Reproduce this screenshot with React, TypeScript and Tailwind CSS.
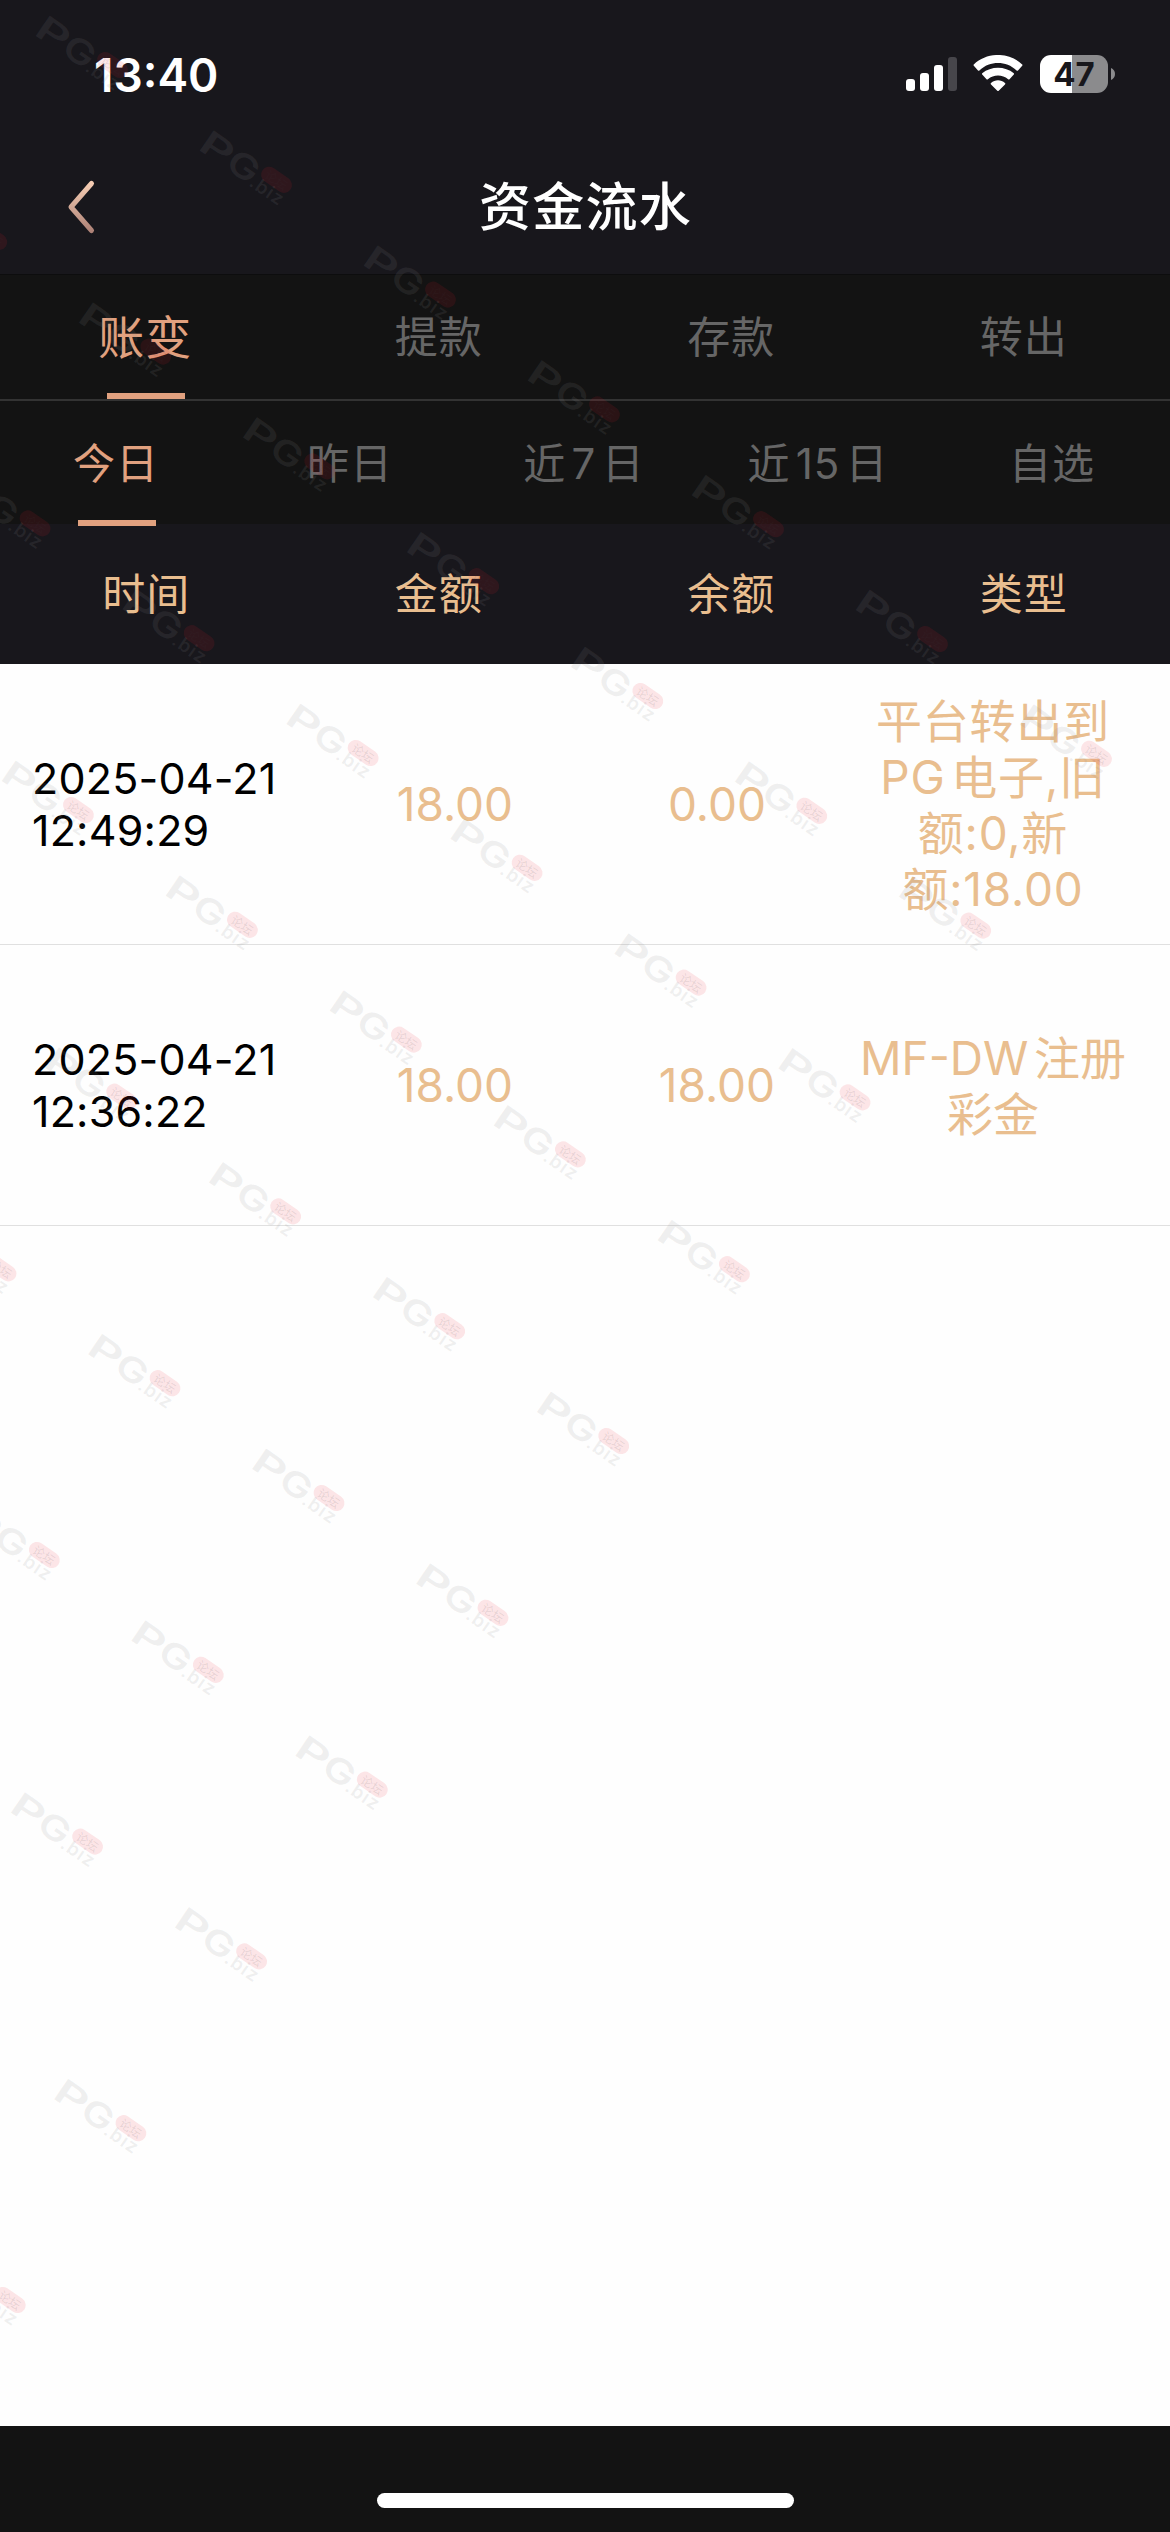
import { clsx } from 'clsx';

const tabs = ['账变', '提款', '存款', '转出'];
const ranges = ['今日', '昨日', '近7日', '近15日', '自选'];
const columns = ['时间', '金额', '余额', '类型'];

const records = [
  {
    date: '2025-04-21',
    time: '12:49:29',
    amount: '18.00',
    balance: '0.00',
    type: ['平台转出到', 'PG电子,旧', '额:0,新', '额:18.00'],
  },
  {
    date: '2025-04-21',
    time: '12:36:22',
    amount: '18.00',
    balance: '18.00',
    type: ['MF-DW注册', '彩金'],
  },
];

// diagonal lattice of stamps, one row shorter each time
const stamps = Array.from({ length: 10 }, (_, b) =>
  Array.from({ length: 10 - b }, (_, i) => {
    const a = i - 3;
    return { x: 34 + 164 * a + 43.3 * b, y: 14.5 + 114.8 * a + 286.6 * b };
  })
)
  .flat()
  .filter((s) => s.x > -95 && s.x < 1170 && s.y > -80);

function StatusBar() {
  return (
    <div className="h-[148px] flex justify-between pl-[94px] pr-[55px]">
      <span className="pt-[47px] text-[46px] leading-[56px] font-semibold text-white">13:40</span>
      <div className="flex pt-[55px]">
        <svg className="w-[51px] h-[38px]" viewBox="0 0 51 38" fill="#fff">
          <rect x="0" y="24" width="9" height="12" rx="3" />
          <rect x="14" y="18" width="9" height="18" rx="3" />
          <rect x="28" y="10" width="9" height="26" rx="3" />
          <rect x="42" y="2" width="9" height="34" rx="3" fill="#47464b" />
        </svg>
        <svg className="ml-[16px] w-[50px] h-[38px]" viewBox="0 0 50 38" fill="#fff">
          <path d="M0.8 10.8a1 1 0 0 1 0-1.4C14-3.2 36-3.2 49.2 9.4a1 1 0 0 1 0 1.4l-4.2 4.6a1 1 0 0 1-1.4 0C33 5.6 17 5.6 6.4 15.4a1 1 0 0 1-1.4 0z" />
          <path d="M9.2 19.6a1 1 0 0 1 0-1.4C18 10.8 32 10.8 40.8 18.2a1 1 0 0 1 0 1.4l-4.3 4.6a1 1 0 0 1-1.4 0c-5.8-5-14.4-5-20.2 0a1 1 0 0 1-1.4 0z" />
          <path d="M18 29.4a1 1 0 0 1 0-1.5c4-3.400 10-3.400 14 0a1 1 0 0 1 0 1.5l-6.300 6.300a1 1 0 0 1-1.400 0z" />
        </svg>
        <div className="ml-[17px] flex w-[68px] h-[38px] items-center justify-center rounded-[11px] bg-[linear-gradient(90deg,#fff_47%,#8b8b8d_47%)] text-[33px] leading-[38px] font-bold text-[#18171c]">
          47
        </div>
        <svg className="mt-[13px] ml-[3px] w-1 h-3" viewBox="0 0 4 12" fill="#8b8b8d">
          <path d="M0 0c2.6 1.100 4 3.400 4 6s-1.400 4.900-4 6z" />
        </svg>
      </div>
    </div>
  );
}

function Stamp({ x, y }: { x: number; y: number }) {
  return (
    <g transform={`translate(${x} ${y})`}>
      <g transform="translate(1 21) rotate(34.5)" fill="#8c8c8c" fillOpacity="0.13">
        <text x="-3" y="0" fontSize="34" fontWeight="600" textLength="34" lengthAdjust="spacingAndGlyphs">P</text>
        <text x="30" y="0" fontSize="34" fontWeight="600" textLength="32" lengthAdjust="spacingAndGlyphs">G</text>
        <text x="60" y="1" fontSize="19" fontWeight="600" textLength="37">.biz</text>
      </g>
      <g transform="translate(78.5 50.5) rotate(34.5)">
        <rect x="-17" y="-8" width="34" height="16" rx="8" fill="#f01830" fillOpacity="0.11" />
        <text x="-12" y="5" fontSize="12" fill="#404040" fillOpacity="0.12">论坛</text>
      </g>
    </g>
  );
}

export default function App() {
  return (
    <div className="relative flex flex-col w-[1170px] h-[2532px] overflow-hidden bg-[#fefefe] font-['Inter','Noto_Sans_CJK_SC',sans-serif] [text-autospace:normal]">
      <header className="h-[274px] bg-[#18171c]">
        <StatusBar />
        <div className="flex items-center h-[118px] px-[66px]">
          <svg className="w-[30px] h-[56px]" viewBox="0 0 30 56" fill="none">
            <defs>
              <linearGradient id="back" x1="0" y1="0" x2="0" y2="56" gradientUnits="userSpaceOnUse">
                <stop stopColor="#fbd3b8" />
                <stop offset="1" stopColor="#a97d73" />
              </linearGradient>
            </defs>
            <path d="M25.5 4.5 5 28l20.5 23.5" stroke="url(#back)" strokeWidth="5" strokeLinecap="round" strokeLinejoin="round" />
          </svg>
          <h1 className="flex-1 pt-[2px] pr-[29px] text-center text-[52px] tracking-[1.3px] font-medium text-white">资金流水</h1>
        </div>
      </header>

      <nav className="grid grid-cols-4 h-[127px] border-t border-b-2 border-t-[#0d0d0e] border-b-[#333] bg-[#131313]">
        {tabs.map((tab, i) => (
          <div
            key={tab}
            className={clsx(
              'flex flex-col items-center justify-between',
              i === 0 ? 'text-[46px] text-[#e1a17f]' : 'text-[43px] text-[#666]'
            )}
          >
            <span className={clsx('leading-[124px] h-[118px] tracking-[1px]', i === 0 && 'pr-[2px]')}>{tab}</span>
            {i === 0 && <span className="w-[78px] h-[6px] bg-[#e1a17f]" />}
          </div>
        ))}
      </nav>

      <nav className="grid grid-cols-5 h-[123px] bg-[#131313] text-[42px]">
        {ranges.map((range, i) => (
          <div key={range} className={clsx('flex flex-col items-center', i === 0 ? 'text-[#e1a17f]' : 'text-[#666]')}>
            <span className="leading-[125px] h-[119px] pr-[2px] tracking-[1px]">{range}</span>
            {i === 0 && <span className="relative w-[78px] h-[6px] shrink-0 bg-[#e1a17f]" />}
          </div>
        ))}
      </nav>

      <div className="grid grid-cols-4 h-[140px] items-center bg-[#18171c] text-center text-[43px] tracking-[1px] text-[#e9be8f]">
        {columns.map((col) => (
          <span key={col}>{col}</span>
        ))}
      </div>

      <main className="flex-1">
        {records.map((r) => (
          <div key={r.time} className="flex items-center h-[281px] border-b border-[#e0e0e0] text-center text-[46px] text-[#e9be8f]">
            <div className="w-[324px] pl-[32px] text-left text-[43px] leading-[52px] tracking-[0.2px] text-black">
              <p>{r.date}</p>
              <p>{r.time}</p>
            </div>
            <div className="w-[262px]">{r.amount}</div>
            <div className="w-[262px]">{r.balance}</div>
            <div className="w-[290px] pt-[2px] leading-[56px]">
              {r.type.map((line) => (
                <p key={line} className={clsx('whitespace-nowrap', r.type.length > 2 && 'tracking-[0.8px]')}>{line}</p>
              ))}
            </div>
          </div>
        ))}
      </main>

      <footer className="flex justify-center h-[106px] pt-[67px] bg-[#131313]">
        <div className="w-[417px] h-[15px] rounded-full bg-white" />
      </footer>

      <svg className="absolute inset-0 w-full h-full pointer-events-none" viewBox="0 0 1170 2532">
        {stamps.map((s) => (
          <Stamp key={`${s.x}-${s.y}`} x={s.x} y={s.y} />
        ))}
      </svg>
    </div>
  );
}
